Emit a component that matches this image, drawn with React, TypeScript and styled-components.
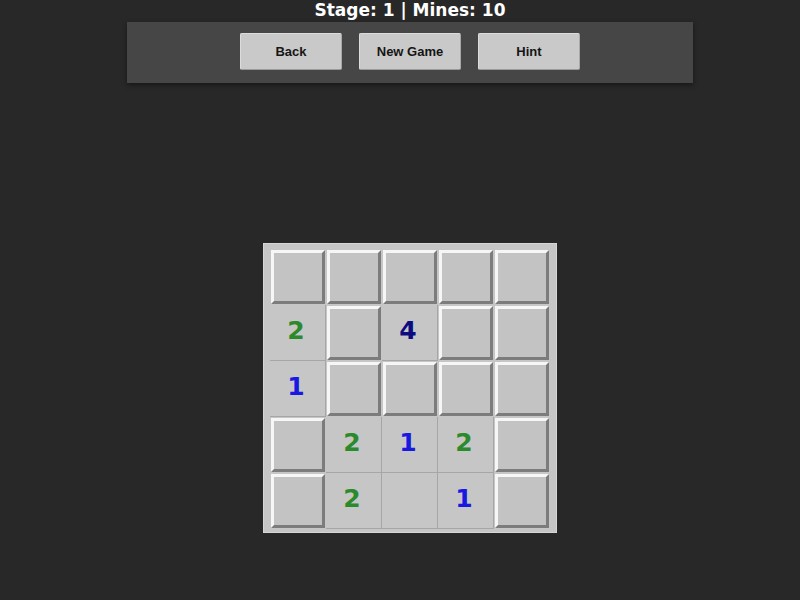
import styled, { createGlobalStyle } from "styled-components";

const GlobalStyle = createGlobalStyle`
  body {
    margin: 0;
    background-color: #282828;
    font-family: "Liberation Sans", Arial, sans-serif;
  }
`;

type CellData = {
  open: boolean;
  count?: number;
};

// board as it stands on screen, row by row
const board: CellData[][] = [
  [{ open: false }, { open: false }, { open: false }, { open: false }, { open: false }],
  [{ open: true, count: 2 }, { open: false }, { open: true, count: 4 }, { open: false }, { open: false }],
  [{ open: true, count: 1 }, { open: false }, { open: false }, { open: false }, { open: false }],
  [{ open: false }, { open: true, count: 2 }, { open: true, count: 1 }, { open: true, count: 2 }, { open: false }],
  [{ open: false }, { open: true, count: 2 }, { open: true }, { open: true, count: 1 }, { open: false }],
];

const numberColors: Record<number, string> = {
  1: "#1818e0",
  2: "#2b8a2b",
  3: "#d02020",
  4: "#0c0c80",
};

const App = () => {
  return (
    <>
      <GlobalStyle />
      <Page>
        <Title>Stage: 1 | Mines: 10</Title>
        <Toolbar>
          <ToolButton>Back</ToolButton>
          <ToolButton>New Game</ToolButton>
          <ToolButton>Hint</ToolButton>
        </Toolbar>
        <Board>
          {board.map((row, r) =>
            row.map((cell, c) =>
              cell.open ? (
                <OpenCell key={`${r}-${c}`} color={numberColors[cell.count ?? 0]}>
                  {cell.count ?? ""}
                </OpenCell>
              ) : (
                <ClosedCell key={`${r}-${c}`} />
              )
            )
          )}
        </Board>
      </Page>
    </>
  );
};

export default App;

const Page = styled.div`
  display: flex;
  flex-direction: column;
  align-items: center;
  width: 800px;
  min-height: 600px;
  padding-left: 20px;
  box-sizing: border-box;
`;
const Title = styled.h1`
  margin: 0;
  height: 22px;
  line-height: 21px;
  font-family: "DejaVu Sans", sans-serif;
  font-size: 17px;
  font-weight: 700;
  color: #ffffff;
`;
const Toolbar = styled.div`
  display: flex;
  justify-content: center;
  align-items: flex-start;
  gap: 17px;
  width: 566px;
  height: 61px;
  padding-top: 11px;
  box-sizing: border-box;
  background-color: #464646;
  box-shadow: 0 2px 5px rgba(0, 0, 0, 0.45);
`;
const ToolButton = styled.button`
  width: 102px;
  height: 37px;
  background-color: #c9c9c9;
  border: 1px solid #dcdcdc;
  border-bottom-color: #9a9a9a;
  border-right-color: #a8a8a8;
  border-radius: 2px;
  font-family: "Liberation Sans", Arial, sans-serif;
  font-size: 13px;
  font-weight: 700;
  color: #151515;
  cursor: pointer;
`;
const Board = styled.div`
  display: grid;
  grid-template-columns: repeat(5, 56px);
  grid-auto-rows: 56px;
  margin-top: 160px;
  padding: 5px 6px 3px 6px;
  background-color: #c6c6c6;
  border: 1px solid #d6d6d6;
`;
const ClosedCell = styled.div`
  margin: 1px;
  background-color: #c3c3c3;
  border: 3px solid;
  border-color: #f6f6f6 #7c7c7c #7c7c7c #f6f6f6;
`;
const OpenCell = styled.div<{ color?: string }>`
  display: flex;
  align-items: center;
  justify-content: center;
  padding: 0 3px 5px 0;
  background-color: #c6c6c6;
  border-right: 1px solid #a6a6a6;
  border-bottom: 1px solid #a6a6a6;
  font-family: "DejaVu Sans", sans-serif;
  font-size: 25px;
  font-weight: 700;
  color: ${(props) => props.color ?? "#000"};
`;
